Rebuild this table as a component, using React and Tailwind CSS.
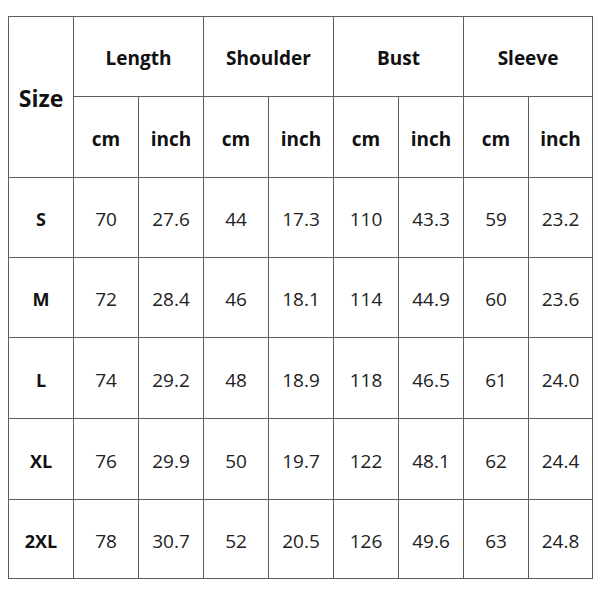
import React from "react";

const rows = [
  ["S", "70", "27.6", "44", "17.3", "110", "43.3", "59", "23.2"],
  ["M", "72", "28.4", "46", "18.1", "114", "44.9", "60", "23.6"],
  ["L", "74", "29.2", "48", "18.9", "118", "46.5", "61", "24.0"],
  ["XL", "76", "29.9", "50", "19.7", "122", "48.1", "62", "24.4"],
  ["2XL", "78", "30.7", "52", "20.5", "126", "49.6", "63", "24.8"],
];

const groups = ["Length", "Shoulder", "Bust", "Sleeve"];

export default function App() {
  return (
    <div className="w-[600px] h-[597px] bg-white pt-[16px] pl-[8px]" style={{ fontFamily: '"Open Sans", "Liberation Sans", sans-serif' }}>
      <div className="inline-grid bg-[#5c5c5c] p-px gap-px grid-cols-[64px_64px_64px_64px_64px_64px_64px_64px_63px] grid-rows-[79px_80px_79px_79px_80px_80px_78px]">
        <div className="row-span-2 bg-white flex items-center justify-center pt-[3px] text-[23px] font-bold text-[#111]">Size</div>
        {groups.map((g) => (
          <div key={g} className="col-span-2 bg-white flex items-center justify-center pt-[4px] text-[19px] font-bold text-[#111]">{g}</div>
        ))}
        {groups.map((g) => (
          <React.Fragment key={g + "u"}>
            <div className="bg-white flex items-center justify-center pt-[4px] text-[19px] font-bold text-[#111]">cm</div>
            <div className="bg-white flex items-center justify-center pt-[4px] text-[19px] font-bold text-[#111]">inch</div>
          </React.Fragment>
        ))}
        {rows.map((r) => (
          <React.Fragment key={r[0]}>
            <div className="bg-white flex items-center justify-center pt-[4px] text-[18px] font-bold text-[#111]">{r[0]}</div>
            {r.slice(1).map((v, i) => (
              <div key={i} className="bg-white flex items-center justify-center pt-[4px] text-[19px] text-[#222]">{v}</div>
            ))}
          </React.Fragment>
        ))}
      </div>
    </div>
  );
}
